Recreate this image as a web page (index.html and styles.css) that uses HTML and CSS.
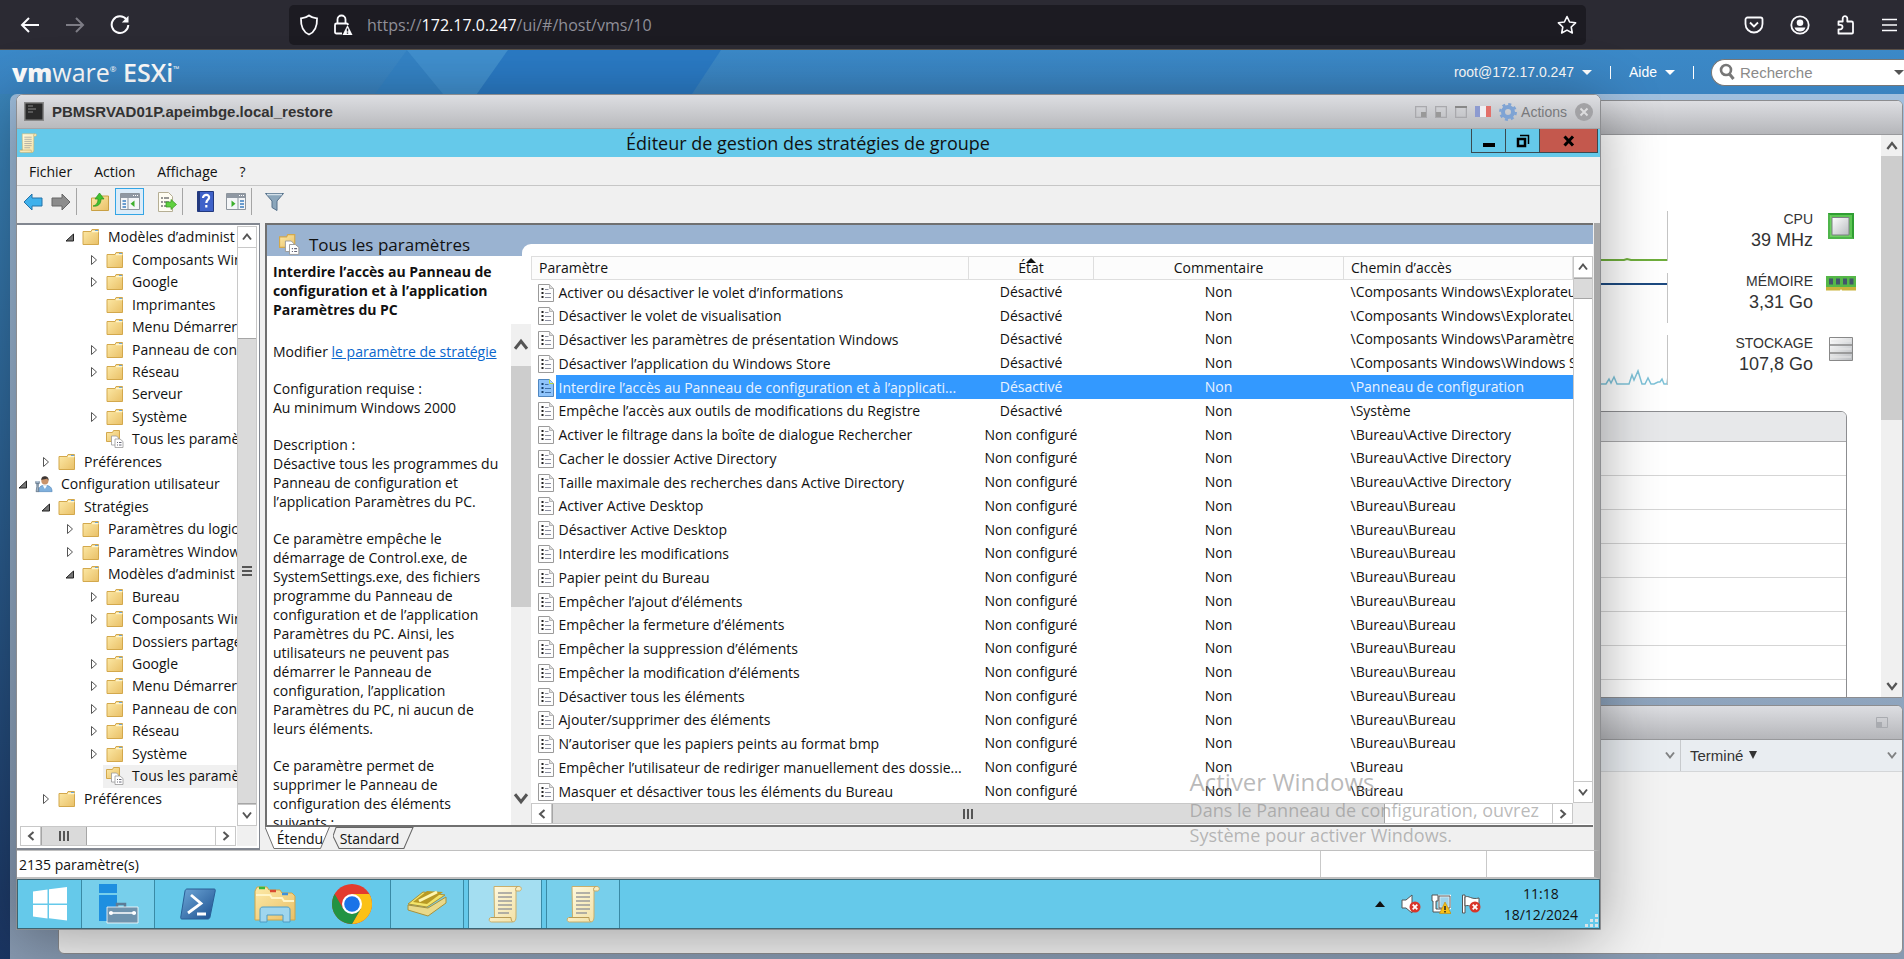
FILE: index.html
```html
<!DOCTYPE html>
<html lang="fr">
<head>
    <meta charset="utf-8">
    <title>PBMSRVAD01P.apeimbge.local_restore - VMware ESXi</title>
    <link rel="stylesheet" href="styles.css">
</head>
<body>

<!-- shared icons -->
<svg class="defs" aria-hidden="true">
    <defs>
        <linearGradient id="gFolder" x1="0" y1="0" x2="1" y2="1"><stop offset="0" stop-color="#fdeaa8"/><stop offset="1" stop-color="#e9c067"/></linearGradient>
        <linearGradient id="gMetal" x1="0" y1="0" x2="1" y2="1"><stop offset="0" stop-color="#fff"/><stop offset="1" stop-color="#b9bcc0"/></linearGradient>
        <linearGradient id="gBlue" x1="0" y1="0" x2="1" y2="1"><stop offset="0" stop-color="#6fa8d8"/><stop offset="1" stop-color="#1b4f8f"/></linearGradient>
        <linearGradient id="gScroll" x1="0" y1="0" x2="1" y2="1"><stop offset="0" stop-color="#fffbe2"/><stop offset="1" stop-color="#f1dfa2"/></linearGradient>
    </defs>
    <symbol id="folder" viewBox="0 0 18 18">
        <path d="M1 3.5h8l1-2h6.5v15H1z" fill="url(#gFolder)" stroke="#d3a84c" stroke-width="1"/>
        <path d="M10 3.5h6.5" stroke="#fff6cf" stroke-width="1.5"/><path d="M13 2.5h3" stroke="#6fa6d6"/>
    </symbol>
    <symbol id="folderdoc" viewBox="0 0 18 18">
        <path d="M.5 2.5h6l1-2h6v11H.5z" fill="url(#gFolder)" stroke="#d3a84c"/>
        <path d="M5.500 6h5l2 2v7h-7z" fill="#fff" stroke="#999" stroke-width=".8"/>
        <path d="M9 9h5l3 2.500V17.500H9z" fill="#fff" stroke="#999" stroke-width=".8"/>
        <path d="M11 12.500h1M13 12.500h2.500M11 15h1M13 15h2.500" stroke="#667" stroke-width="1"/>
    </symbol>
    <symbol id="user" viewBox="0 0 20 18">
        <path d="M4 17.500c0-5 2-7 7-7s8 2 8 7z" fill="#7fb0dd" stroke="#4a7fb2" stroke-width=".6"/>
        <path d="M8.500 10.500l2.500 4 2.500-4z" fill="#fff"/>
        <circle cx="11" cy="5.500" r="4" fill="#c9936a"/><path d="M7 4.500C7 1 9 .3 11 .3s4.500 1 4 5l-1.500-2.300c-2 .8-4 .8-6.500 1.500z" fill="#3c3532"/>
        <path d="M2 8.500v3.500l-.8 5.500h3L3.700 12V8.500M.8 6v2.500h4V6" fill="#9fb4c8" stroke="#5a6d80" stroke-width=".8"/>
    </symbol>
    <symbol id="closed" viewBox="0 0 10 12"><path d="M2.500 1.500v9l5-4.500z" fill="#fff" stroke="#555" stroke-width="1"/></symbol>
    <symbol id="open" viewBox="0 0 10 12"><path d="M8.500 3v7H1z" fill="#777" stroke="#222" stroke-width="1"/></symbol>
    <symbol id="doc" viewBox="0 0 16 18">
        <path d="M.5.500h11l4 4v13H.5z" fill="#fdfdfd" stroke="#9a9a9a"/><path d="M11.500.500v4h4" fill="#ddd" stroke="#b5b5b5"/>
        <path d="M3.500 5h2M3.500 9h2M3.500 13h2" stroke="#222" stroke-width="2"/>
        <path d="M7 5.500h3.500M7 9.500h6M7 13.500h6" stroke="#8b8fa0"/>
    </symbol>
    <symbol id="docsel" viewBox="0 0 16 18">
        <path d="M.5.500h11l4 4v13H.5z" fill="#8fc4fb" stroke="#4f86c0"/><path d="M11.500.500v4h4" fill="#a9d2ff" stroke="#b9d83a"/>
        <path d="M3.500 5h2M3.500 9h2M3.500 13h2" stroke="#15406e" stroke-width="2"/>
        <path d="M7 5.500h3.500M7 9.500h6M7 13.500h6" stroke="#3f72ad"/>
    </symbol>
    <symbol id="parchment" viewBox="0 0 34 38">
        <path d="M6 1.500h25c3 0 3 4 .5 4.500H28v26c0 3-1 5-3.500 5H3.500c-3 0-3-4.500-.5-4.500h3.500z" fill="url(#gScroll)" stroke="#c9ae6a"/>
        <path d="M28 6c-1-2 0-4 1.500-4.300M3 32.500h20c0 2 .5 3.500 1.500 4.300" fill="none" stroke="#b99c57"/>
        <path d="M10 8h14M10 12h14M10 16h14M10 20h14M10 24h14M10 28h11" stroke="#9a9a9a" stroke-width="1.300"/>
    </symbol>
    <symbol id="up" viewBox="0 0 12 12"><path d="M2 8.500l4-5 4 5" fill="none" stroke="#555" stroke-width="2"/></symbol>
    <symbol id="down" viewBox="0 0 12 12"><path d="M2 3.500l4 5 4-5" fill="none" stroke="#555" stroke-width="2"/></symbol>
    <symbol id="left" viewBox="0 0 12 12"><path d="M8.500 2l-4.500 4 4.500 4" fill="none" stroke="#555" stroke-width="2"/></symbol>
    <symbol id="right" viewBox="0 0 12 12"><path d="M3.500 2l4.500 4-4.500 4" fill="none" stroke="#555" stroke-width="2"/></symbol>
    <symbol id="redcross" viewBox="0 0 12 12"><circle cx="6" cy="6" r="5.500" fill="#d8362a"/><path d="M3.700 3.700l4.600 4.600M8.300 3.700l-4.600 4.600" stroke="#fff" stroke-width="1.800"/></symbol>
    <symbol id="panel" viewBox="0 0 20 17">
        <path d="M.5.500h19v16H.5z" fill="#f4f6f8" stroke="#8d959d"/><path d="M1 1h18v4H1z" fill="#8f98a3"/><path d="M13 2.500h1M15 2.500h1M17 2.500h1" stroke="#fff"/>
    </symbol>
</svg>

<div class="browserbar">
    <div class="nav">
        <button title="Précédent"><svg width="20" height="18" viewBox="0 0 20 18"><path d="M19 9H2M9 2L2 9l7 7" fill="none" stroke="#fbfbfe" stroke-width="2"/></svg></button>
        <button title="Suivant"><svg width="20" height="18" viewBox="0 0 20 18"><path d="M1 9h17M11 2l7 7-7 7" fill="none" stroke="#7d7c85" stroke-width="2"/></svg></button>
        <button title="Actualiser"><svg width="20" height="20" viewBox="0 0 20 20"><path d="M16.500 4.500A8.300 8.300 0 1 0 18.300 10" fill="none" stroke="#fbfbfe" stroke-width="2"/><path d="M18.500.800v6.700h-6.700z" fill="#fbfbfe"/></svg></button>
    </div>
    <div class="address">
        <svg width="20" height="22" viewBox="0 0 20 22"><path d="M10 1.500c2.500 2 5 2.600 8 2.900C18.300 12 16 18 10 20.500 4 18 1.700 12 2 4.400 5 4.100 7.500 3.500 10 1.500z" fill="none" stroke="#fbfbfe" stroke-width="1.800"/></svg>
        <svg width="20" height="22" viewBox="0 0 20 22"><path d="M4.500 9V5.500a4 4 0 0 1 8 0V9M9 19.500H3.500c-1 0-1.500-.5-1.500-1.500v-7c0-1 .5-1.500 1.500-1.500h10c1 0 1.500.5 1.500 1.500" fill="none" stroke="#fbfbfe" stroke-width="1.800"/><path d="M14.500 11l5 10h-10z" fill="#fbfbfe"/><path d="M14.500 14.500v3M14.500 18.500v1.200" stroke="#1c1b22" stroke-width="1.400"/></svg>
        <div class="url" role="textbox" aria-label="Adresse">https://<b>172.17.0.247</b>/ui/#/host/vms/10</div>
        <svg width="20" height="20" viewBox="0 0 20 20"><path d="M10 1.500l2.600 5.500 6 .8-4.400 4.200 1.100 6L10 15.100 4.700 18l1.100-6L1.400 7.800l6-.8z" fill="none" stroke="#fbfbfe" stroke-width="1.600" stroke-linejoin="round"/></svg>
    </div>
    <div class="tools">
        <button title="Pocket"><svg width="20" height="18" viewBox="0 0 20 18"><path d="M3.500 1.500h13c1 0 2 .8 2 2V8a8.500 8.500 0 0 1-17 0V3.500c0-1.200 1-2 2-2z" fill="none" stroke="#fbfbfe" stroke-width="1.800"/><path d="M6 6.500l4 4 4-4" fill="none" stroke="#fbfbfe" stroke-width="1.800"/></svg></button>
        <button title="Compte"><svg width="20" height="20" viewBox="0 0 20 20"><circle cx="10" cy="10" r="8.700" fill="none" stroke="#fbfbfe" stroke-width="1.800"/><circle cx="10" cy="7.700" r="3.300" fill="#fbfbfe"/><path d="M4.500 12.500h11c-1 3-3 4-5.500 4s-4.500-1-5.500-4z" fill="#fbfbfe"/></svg></button>
        <button title="Extensions"><svg width="20" height="20" viewBox="0 0 20 20"><path d="M2.500 6.500h4.200V3.500a2.300 2.300 0 0 1 4.600 0v3h4.200c1 0 1.500.5 1.500 1.500v9.500c0 .6-.4 1-1 1H2.500v-4.200h1.800a2.200 2.200 0 0 0 0-4.400H2.500z" fill="none" stroke="#fbfbfe" stroke-width="1.800" stroke-linejoin="round"/></svg></button>
        <button title="Menu"><svg width="15" height="14" viewBox="0 0 15 14"><path d="M0 1.500h15M0 7h15M0 12.500h15" stroke="#fbfbfe" stroke-width="1.500"/></svg></button>
    </div>
</div>

<div class="header">
    <svg class="facets" width="420" height="44" viewBox="0 0 420 44">
        <path d="M67 0L35 44h68z" fill="#3483c5"/><path d="M67 0h101l-31 44h-34z" fill="#408fce"/><path d="M168 0h213l-29 44H137z" fill="#2a7ac4"/>
    </svg>
    <div class="brand"><b>vm</b><span class="thin">ware</span><sup>®</sup> <span class="esxi">ESXi</span><sup>™</sup></div>
    <div class="account">
        <a href="#">root@172.17.0.247 <i class="caret"></i></a>
        <span class="bar"></span>
        <a href="#">Aide <i class="caret"></i></a>
        <span class="bar"></span>
    </div>
    <label class="search">
        <svg width="16" height="18" viewBox="0 0 16 18"><circle cx="7" cy="7" r="5" fill="none" stroke="#777" stroke-width="2.600"/><path d="M10.500 11l4 5" stroke="#777" stroke-width="3"/></svg>
        <input type="text" placeholder="Recherche" aria-label="Recherche">
        <i class="caret dark"></i>
    </label>
</div>

<div class="workspace">
    <div class="frame">
        <div class="panel host">
            <div class="panelhead"></div>
            <div class="hostbody">
                <div class="hostmain">
                    <div class="stat">
                        <svg class="chart" viewBox="0 0 68 50" preserveAspectRatio="xMaxYMax meet"><path d="M0 49h25l3-1 4 1h36" fill="none" stroke="#6fae3c" stroke-width="2"/></svg>
                        <div class="figures"><span>CPU</span><strong>39 MHz</strong></div>
                        <svg width="30" height="26" viewBox="0 0 30 26"><path d="M2 0h26v26H2z" fill="#2f9e32"/><path d="M4 2h22v22H4z" fill="#5cc653"/><path d="M2 26V0l26 26z" fill="#8be07a" opacity=".35"/><path d="M6 4.500h17V22H6z" fill="url(#gMetal)" stroke="#7d8085"/></svg>
                    </div>
                    <div class="stat">
                        <svg class="chart" viewBox="0 0 68 50" preserveAspectRatio="xMaxYMax meet"><path d="M0 11h68" stroke="#1d4a80" stroke-width="2"/></svg>
                        <div class="figures"><span>MÉMOIRE</span><strong>3,31 Go</strong></div>
                        <svg width="30" height="16" viewBox="0 0 30 16"><path d="M0 1h30v11H0z" fill="#55b848"/><path d="M0 12h30v3.500H16l-1-1.500-1 1.500H0z" fill="#c9b33c"/><path d="M3 3.500h4v6H3zM10 3.500h4v6h-4zM17 3.500h4v6h-4zM23.500 3.500h4v6h-4z" fill="#43566b"/></svg>
                    </div>
                    <div class="stat">
                        <svg class="chart" viewBox="0 0 68 50" preserveAspectRatio="xMaxYMax meet"><path d="M0 49h7l3-5 2 4 3-6 3 7h12l3-9 2 5 4-9 4 13h3l3-6 3 6h3l4-2h2l2-3 2 5h3l1-8" fill="none" stroke="#7fc3d9" stroke-width="1.500"/></svg>
                        <div class="figures"><span>STOCKAGE</span><strong>107,8 Go</strong></div>
                        <svg width="30" height="24" viewBox="0 0 30 24"><path d="M3.500.500h23v23h-23z" fill="url(#gMetal)" stroke="#888"/><path d="M3.500 8h23M3.500 16h23" stroke="#888" stroke-width="1.500"/><path d="M5 4h20M5 12h20M5 20h20" stroke="#e8e8e8"/></svg>
                    </div>
                    <div class="grid"><div></div><div></div><div></div><div></div><div></div><div></div><div></div><div></div><div></div></div>
                </div>
                <div class="scroll plain hostscroll">
                    <button title="Haut"><svg width="14" height="14"><use href="#up"/></svg></button>
                    <div class="thumb"></div>
                    <div class="track"></div>
                    <button title="Bas"><svg width="14" height="14"><use href="#down"/></svg></button>
                </div>
            </div>
        </div>
        <div class="panel tasks">
            <div class="panelhead"><svg width="12" height="11" viewBox="0 0 12 11"><path d="M.5.500h11v10H.5z" fill="none" stroke="#a9abb0"/><path d="M1 5h5v5H1z" fill="#a9abb0"/></svg></div>
            <div class="taskcols">
                <div class="col"><svg width="12" height="12"><use href="#down"/></svg></div>
                <div class="col last">Terminé <i class="sort"></i><svg width="12" height="12"><use href="#down"/></svg></div>
            </div>
        </div>
    </div>

    <!-- console window -->
    <div class="console">
        <div class="consolehead">
            <svg width="20" height="19" viewBox="0 0 20 19"><path d="M.5.500h19v18H.5z" fill="#2a2a2a" stroke="#888" stroke-width="2"/><path d="M4 4h5M4 7h8M4 10h5" stroke="#888"/></svg>
            <h1>PBMSRVAD01P.apeimbge.local_restore</h1>
            <div class="consoletools">
                <svg width="12" height="12" viewBox="0 0 12 12"><path d="M.5.500h11v11H.5z" fill="none" stroke="#a9a9ad" stroke-width="1.500"/><path d="M6 6h5v5H6z" fill="#999"/></svg>
                <svg width="12" height="12" viewBox="0 0 12 12"><path d="M.5.500h11v11H.5z" fill="none" stroke="#a9a9ad" stroke-width="1.500"/><path d="M1 6h5v5H1z" fill="#999"/></svg>
                <svg width="12" height="12" viewBox="0 0 12 12"><path d="M.5.500h11v11H.5z" fill="none" stroke="#a9a9ad" stroke-width="1.500"/><path d="M0 1h12" stroke="#888" stroke-width="2"/></svg>
                <svg width="16" height="11" viewBox="0 0 16 11"><path d="M0 0h5v11H0z" fill="#8d9bd0"/><path d="M5 0h6v11H5z" fill="#efeff2"/><path d="M11 0h5v11h-5z" fill="#e2706a"/></svg>
                <svg width="18" height="18" viewBox="0 0 18 18"><circle cx="9" cy="9" r="5" fill="none" stroke="#7ea3d4" stroke-width="4"/><circle cx="9" cy="9" r="7.700" fill="none" stroke="#7ea3d4" stroke-width="2.500" stroke-dasharray="3 3.050"/></svg>
                <a href="#">Actions</a>
                <button title="Fermer"><svg width="18" height="18" viewBox="0 0 18 18"><circle cx="9" cy="9" r="9" fill="#a2a2a5"/><path d="M5.500 5.500l7 7M12.500 5.500l-7 7" stroke="#dcdcde" stroke-width="2"/></svg></button>
            </div>
        </div>

        <div class="guest">
            <div class="titlebar">
                <svg width="18" height="20"><use href="#parchment"/></svg>
                <h2>Éditeur de gestion des stratégies de groupe</h2>
                <div class="winbuttons">
                    <button title="Réduire"><svg width="14" height="14" viewBox="0 0 14 14"><path d="M1 9h12v4H1z"/></svg></button>
                    <button title="Restaurer"><svg width="14" height="14" viewBox="0 0 14 14"><path d="M2 5h7v7H2z" fill="none" stroke="#000" stroke-width="2.500"/><path d="M4 1.500h8.500V10" fill="none" stroke="#000" stroke-width="1.500"/></svg></button>
                    <button class="close" title="Fermer"><svg width="14" height="14" viewBox="0 0 14 14"><path d="M2.500 2.500l8.500 9M11 2.500l-8.500 9" stroke="#000" stroke-width="3"/></svg></button>
                </div>
            </div>
            <div class="menu"><button>Fichier</button><button>Action</button><button>Affichage</button><button>?</button></div>
            <div class="toolbar">
                <button title="Précédent"><svg width="20" height="20" viewBox="0 0 20 20"><path d="M1 10l8-8v4h10v8H9v4z" fill="#3fb1ec" stroke="#2573a8"/></svg></button>
                <button title="Suivant"><svg width="20" height="20" viewBox="0 0 20 20"><path d="M19 10l-8-8v4H1v8h10v4z" fill="#8c8c8c" stroke="#666"/></svg></button>
                <span class="sep"></span>
                <button title="Dossier parent"><svg width="20" height="20" viewBox="0 0 20 20"><path d="M1.500 6h9l1-2h7v14.500h-17z" fill="url(#gFolder)" stroke="#c9a044"/><path d="M3 14c4-1 5-4 5-7H5l4.500-6L14 7h-3c0 5-3 8-8 7z" fill="#3fc22f" stroke="#2b8f1f" stroke-width=".7"/></svg></button>
                <button class="on" title="Arborescence"><svg width="20" height="17" viewBox="0 0 20 17"><use href="#panel"/><path d="M2.500 8H6M2.500 11H6M2.500 14H6" stroke="#3d7fc0" stroke-width="1.500"/><path d="M8 5v12" stroke="#8d959d"/><path d="M14.500 7.500v6.500l-4-3.300z" fill="#3db02c"/></svg></button>
                <button class="export" title="Exporter"><svg width="20" height="20" viewBox="0 0 20 20"><path d="M1.500.500h10l4 4v15h-14z" fill="#fffdf2" stroke="#b5ae94"/><path d="M4 6h2M4 10h2M4 14h2M7 6h5M7 10h5M7 14h4" stroke="#777" stroke-width="1.400"/><path d="M9 10h5V7.500l5.500 5-5.500 5V15H9z" fill="#5fd03f" stroke="#35921f" stroke-width=".7"/></svg></button>
                <span class="sep"></span>
                <button title="Aide"><svg width="17" height="21" viewBox="0 0 17 21"><path d="M.5.500h16v20H.5z" fill="#3f62c9" stroke="#22397f"/><path d="M1 1h2v19H1z" fill="#22397f"/><path d="M6 7c0-4.500 7-4 6 0-.5 2-2.500 2-2.700 5M9.300 14v2.500" fill="none" stroke="#fff" stroke-width="2.200"/></svg></button>
                <button title="Volet Actions"><svg width="20" height="17" viewBox="0 0 20 17"><use href="#panel"/><path d="M14 8h4M14 11h4M14 14h4" stroke="#3d7fc0" stroke-width="1.500"/><path d="M12 5v12" stroke="#8d959d"/><path d="M5.500 7.500v6.500l4-3.300z" fill="#3db02c"/></svg></button>
                <span class="sep"></span>
                <button title="Filtre"><svg width="19" height="19" viewBox="0 0 19 19"><path d="M.5 1.500h18L12 9v9.500l-5-3V9z" fill="#8ba6bb" stroke="#56718a"/><path d="M2 2.500h15" stroke="#d5e1ea" stroke-width="1.500"/></svg></button>
            </div>

            <div class="mmc">
                <div class="treepane">
                    <ul class="tree">
                        <li class="l2"><svg class="ex"><use href="#open"/></svg><svg class="ic"><use href="#folder"/></svg>Modèles d’administ</li>
                        <li class="l3"><svg class="ex"><use href="#closed"/></svg><svg class="ic"><use href="#folder"/></svg>Composants Windows</li>
                        <li class="l3"><svg class="ex"><use href="#closed"/></svg><svg class="ic"><use href="#folder"/></svg>Google</li>
                        <li class="l3"><svg class="ex"></svg><svg class="ic"><use href="#folder"/></svg>Imprimantes</li>
                        <li class="l3"><svg class="ex"></svg><svg class="ic"><use href="#folder"/></svg>Menu Démarrer</li>
                        <li class="l3"><svg class="ex"><use href="#closed"/></svg><svg class="ic"><use href="#folder"/></svg>Panneau de configuration</li>
                        <li class="l3"><svg class="ex"><use href="#closed"/></svg><svg class="ic"><use href="#folder"/></svg>Réseau</li>
                        <li class="l3"><svg class="ex"></svg><svg class="ic"><use href="#folder"/></svg>Serveur</li>
                        <li class="l3"><svg class="ex"><use href="#closed"/></svg><svg class="ic"><use href="#folder"/></svg>Système</li>
                        <li class="l3"><svg class="ex"></svg><svg class="ic"><use href="#folderdoc"/></svg>Tous les paramètres</li>
                        <li class="l1"><svg class="ex"><use href="#closed"/></svg><svg class="ic"><use href="#folder"/></svg>Préférences</li>
                        <li class="l0"><svg class="ex"><use href="#open"/></svg><svg class="ic"><use href="#user"/></svg>Configuration utilisateur</li>
                        <li class="l1"><svg class="ex"><use href="#open"/></svg><svg class="ic"><use href="#folder"/></svg>Stratégies</li>
                        <li class="l2"><svg class="ex"><use href="#closed"/></svg><svg class="ic"><use href="#folder"/></svg>Paramètres du logiciel</li>
                        <li class="l2"><svg class="ex"><use href="#closed"/></svg><svg class="ic"><use href="#folder"/></svg>Paramètres Windows</li>
                        <li class="l2"><svg class="ex"><use href="#open"/></svg><svg class="ic"><use href="#folder"/></svg>Modèles d’administ</li>
                        <li class="l3"><svg class="ex"><use href="#closed"/></svg><svg class="ic"><use href="#folder"/></svg>Bureau</li>
                        <li class="l3"><svg class="ex"><use href="#closed"/></svg><svg class="ic"><use href="#folder"/></svg>Composants Windows</li>
                        <li class="l3"><svg class="ex"></svg><svg class="ic"><use href="#folder"/></svg>Dossiers partagés</li>
                        <li class="l3"><svg class="ex"><use href="#closed"/></svg><svg class="ic"><use href="#folder"/></svg>Google</li>
                        <li class="l3"><svg class="ex"><use href="#closed"/></svg><svg class="ic"><use href="#folder"/></svg>Menu Démarrer</li>
                        <li class="l3"><svg class="ex"><use href="#closed"/></svg><svg class="ic"><use href="#folder"/></svg>Panneau de configuration</li>
                        <li class="l3"><svg class="ex"><use href="#closed"/></svg><svg class="ic"><use href="#folder"/></svg>Réseau</li>
                        <li class="l3"><svg class="ex"><use href="#closed"/></svg><svg class="ic"><use href="#folder"/></svg>Système</li>
                        <li class="l3 current"><svg class="ex"></svg><svg class="ic"><use href="#folderdoc"/></svg>Tous les paramètres</li>
                        <li class="l1"><svg class="ex"><use href="#closed"/></svg><svg class="ic"><use href="#folder"/></svg>Préférences</li>
                    </ul>
                    <div class="scroll treev">
                        <button title="Haut"><svg width="12" height="12"><use href="#up"/></svg></button>
                        <div class="track"></div>
                        <div class="thumb"><svg width="10" height="10" viewBox="0 0 10 10"><path d="M0 1h10M0 5h10M0 9h10" stroke="#555" stroke-width="2"/></svg></div>
                        <button title="Bas"><svg width="12" height="12"><use href="#down"/></svg></button>
                    </div>
                    <div class="scroll horiz treeh">
                        <button title="Gauche"><svg width="12" height="12"><use href="#left"/></svg></button>
                        <div class="thumb"><svg width="10" height="10" viewBox="0 0 10 10"><path d="M1 0v10M5 0v10M9 0v10" stroke="#555" stroke-width="2"/></svg></div>
                        <div class="track"></div>
                        <button title="Droite"><svg width="12" height="12"><use href="#right"/></svg></button>
                    </div>
                    <div class="corner"></div>
                </div>

                <div class="right">
                    <div class="result">
                        <div class="extended">
                            <div class="banner"><svg width="21" height="21"><use href="#folderdoc"/></svg>Tous les paramètres</div>
                            <h3>Interdire l’accès au Panneau de<br>configuration et à l’application<br>Paramètres du PC</h3>
                            <div class="descwrap">
                                <div class="desc">
                                    <p>Modifier <a href="#">le paramètre de stratégie</a></p>
                                    <p>Configuration requise :<br>Au minimum Windows 2000</p>
                                    <p>Description :<br>Désactive tous les programmes du<br>Panneau de configuration et<br>l’application Paramètres du PC.</p>
                                    <p>Ce paramètre empêche le<br>démarrage de Control.exe, de<br>SystemSettings.exe, des fichiers<br>programme du Panneau de<br>configuration et de l’application<br>Paramètres du PC. Ainsi, les<br>utilisateurs ne peuvent pas<br>démarrer le Panneau de<br>configuration, l’application<br>Paramètres du PC, ni aucun de<br>leurs éléments.</p>
                                    <p>Ce paramètre permet de<br>supprimer le Panneau de<br>configuration des éléments<br>suivants :</p>
                                </div>
                                <div class="scroll plain descscroll">
                                    <button title="Haut"><svg width="18" height="18"><use href="#up"/></svg></button>
                                    <div class="thumb"></div>
                                    <div class="track"></div>
                                    <button title="Bas"><svg width="18" height="18"><use href="#down"/></svg></button>
                                </div>
                            </div>
                        </div>
                        <div class="listside">
                            <div class="listframe">
                                <div class="list">
                                    <table>
                                        <colgroup><col class="c1"><col class="c2"><col class="c3"><col></colgroup>
                                        <thead><tr><th>Paramètre</th><th class="mid"><span class="sorted">État<i></i></span></th><th class="mid">Commentaire</th><th>Chemin d’accès</th></tr></thead>
                                        <tbody>
                                            <tr><td><svg><use href="#doc"/></svg><span>Activer ou désactiver le volet d’informations</span></td><td>Désactivé</td><td>Non</td><td>\Composants Windows\Explorateur de fichiers</td></tr>
                                            <tr><td><svg><use href="#doc"/></svg><span>Désactiver le volet de visualisation</span></td><td>Désactivé</td><td>Non</td><td>\Composants Windows\Explorateur de fichiers</td></tr>
                                            <tr><td><svg><use href="#doc"/></svg><span>Désactiver les paramètres de présentation Windows</span></td><td>Désactivé</td><td>Non</td><td>\Composants Windows\Paramètres</td></tr>
                                            <tr><td><svg><use href="#doc"/></svg><span>Désactiver l’application du Windows Store</span></td><td>Désactivé</td><td>Non</td><td>\Composants Windows\Windows Store</td></tr>
                                            <tr class="selected"><td><svg><use href="#docsel"/></svg><span>Interdire l’accès au Panneau de configuration et à l’applicati...</span></td><td>Désactivé</td><td>Non</td><td>\Panneau de configuration</td></tr>
                                            <tr><td><svg><use href="#doc"/></svg><span>Empêche l’accès aux outils de modifications du Registre</span></td><td>Désactivé</td><td>Non</td><td>\Système</td></tr>
                                            <tr><td><svg><use href="#doc"/></svg><span>Activer le filtrage dans la boîte de dialogue Rechercher</span></td><td>Non configuré</td><td>Non</td><td>\Bureau\Active Directory</td></tr>
                                            <tr><td><svg><use href="#doc"/></svg><span>Cacher le dossier Active Directory</span></td><td>Non configuré</td><td>Non</td><td>\Bureau\Active Directory</td></tr>
                                            <tr><td><svg><use href="#doc"/></svg><span>Taille maximale des recherches dans Active Directory</span></td><td>Non configuré</td><td>Non</td><td>\Bureau\Active Directory</td></tr>
                                            <tr><td><svg><use href="#doc"/></svg><span>Activer Active Desktop</span></td><td>Non configuré</td><td>Non</td><td>\Bureau\Bureau</td></tr>
                                            <tr><td><svg><use href="#doc"/></svg><span>Désactiver Active Desktop</span></td><td>Non configuré</td><td>Non</td><td>\Bureau\Bureau</td></tr>
                                            <tr><td><svg><use href="#doc"/></svg><span>Interdire les modifications</span></td><td>Non configuré</td><td>Non</td><td>\Bureau\Bureau</td></tr>
                                            <tr><td><svg><use href="#doc"/></svg><span>Papier peint du Bureau</span></td><td>Non configuré</td><td>Non</td><td>\Bureau\Bureau</td></tr>
                                            <tr><td><svg><use href="#doc"/></svg><span>Empêcher l’ajout d’éléments</span></td><td>Non configuré</td><td>Non</td><td>\Bureau\Bureau</td></tr>
                                            <tr><td><svg><use href="#doc"/></svg><span>Empêcher la fermeture d’éléments</span></td><td>Non configuré</td><td>Non</td><td>\Bureau\Bureau</td></tr>
                                            <tr><td><svg><use href="#doc"/></svg><span>Empêcher la suppression d’éléments</span></td><td>Non configuré</td><td>Non</td><td>\Bureau\Bureau</td></tr>
                                            <tr><td><svg><use href="#doc"/></svg><span>Empêcher la modification d’éléments</span></td><td>Non configuré</td><td>Non</td><td>\Bureau\Bureau</td></tr>
                                            <tr><td><svg><use href="#doc"/></svg><span>Désactiver tous les éléments</span></td><td>Non configuré</td><td>Non</td><td>\Bureau\Bureau</td></tr>
                                            <tr><td><svg><use href="#doc"/></svg><span>Ajouter/supprimer des éléments</span></td><td>Non configuré</td><td>Non</td><td>\Bureau\Bureau</td></tr>
                                            <tr><td><svg><use href="#doc"/></svg><span>N’autoriser que les papiers peints au format bmp</span></td><td>Non configuré</td><td>Non</td><td>\Bureau\Bureau</td></tr>
                                            <tr><td><svg><use href="#doc"/></svg><span>Empêcher l’utilisateur de rediriger manuellement des dossie...</span></td><td>Non configuré</td><td>Non</td><td>\Bureau</td></tr>
                                            <tr><td><svg><use href="#doc"/></svg><span>Masquer et désactiver tous les éléments du Bureau</span></td><td>Non configuré</td><td>Non</td><td>\Bureau</td></tr>
                                        </tbody>
                                    </table>
                                </div>
                                <div class="scroll listv">
                                    <button title="Haut"><svg width="12" height="12"><use href="#up"/></svg></button>
                                    <div class="thumb"></div>
                                    <div class="track"></div>
                                    <button title="Bas"><svg width="12" height="12"><use href="#down"/></svg></button>
                                </div>
                                <div class="scroll horiz listh">
                                    <button title="Gauche"><svg width="12" height="12"><use href="#left"/></svg></button>
                                    <div class="thumb"><svg width="10" height="10" viewBox="0 0 10 10"><path d="M1 0v10M5 0v10M9 0v10" stroke="#555" stroke-width="2"/></svg></div>
                                    <div class="track"></div>
                                    <button title="Droite"><svg width="12" height="12"><use href="#right"/></svg></button>
                                </div>
                                <div class="corner"></div>
                            </div>
                        </div>
                    </div>
                    <div class="tabs">
                        <button class="active"><svg viewBox="0 0 76 22" preserveAspectRatio="none"><path d="M0 0l10 21.500h52L72 0" fill="#fff" stroke="#666"/></svg><span>Étendu</span></button>
                        <button><svg viewBox="0 0 80 22" preserveAspectRatio="none"><path d="M3 .500L0 9l6 12.500h64L79 .500z" fill="#f0f0f0" stroke="#666"/></svg><span>Standard</span></button>
                    </div>
                </div>
            </div>

            <div class="status"><span>2135 paramètre(s)</span><span class="cell a"></span><span class="cell b"></span></div>

            <div class="taskbar">
                <button class="start" title="Démarrer"><svg width="34" height="34" viewBox="0 0 34 34"><path d="M0 4.500L14.500 2.500v14H0zM16 2.200L34 0v16.500H16zM0 18h14.500v13.500L0 29.500zM16 18h18v15.500L16 31.200z" fill="#fff"/></svg></button>
                <button class="run" title="Gestionnaire de serveur"><svg width="42" height="42" viewBox="0 0 42 42"><path d="M2 1h18v9H2zM2 12h18v15h-9v11H2z" fill="#1e8fe0"/><path d="M20 24v-3h8v3" fill="none" stroke="#5d7c96" stroke-width="2.500"/><path d="M10 24h31v16H10z" fill="#6f93ad" stroke="#fff" stroke-width=".8"/><path d="M12 30h27" stroke="#fff" stroke-width="1.500"/><circle cx="14" cy="30" r="2" fill="#fff"/><circle cx="37" cy="30" r="2" fill="#fff"/></svg></button>
                <button title="PowerShell"><svg width="36" height="32" viewBox="0 0 36 32"><path d="M7 1h27c1 0 1.500.7 1.300 1.500L30 29c-.2 1-1 2-2 2H2c-1 0-1.500-.7-1.300-1.500L5 3c.2-1 1-2 2-2z" fill="url(#gBlue)" stroke="#2a5f96"/><path d="M11 7l10 8.500L8 25M17 26h9" fill="none" stroke="#fff" stroke-width="2.800"/></svg></button>
                <button title="Explorateur"><svg width="42" height="38" viewBox="0 0 42 38"><path d="M1 6l2-4h10l2 3h11l2 3h10l3 3v24H1z" fill="url(#gFolder)" stroke="#cfa64a"/><path d="M2 10h14l2 3h10l2 3h10" fill="none" stroke="#fff5c8" stroke-width="2"/><path d="M5 3h6" stroke="#37b839" stroke-width="2.500"/><path d="M16 6h6" stroke="#d94b32" stroke-width="2.500"/><path d="M28 9h6" stroke="#3f91d8" stroke-width="2.500"/><path d="M6 37V25c0-2 1-3 3-3h24c2 0 3 1 3 3v12h-7v-7H13v7z" fill="#9fd6ee" stroke="#4f9cc4"/></svg></button>
                <button title="Chrome"><svg width="40" height="40" viewBox="0 0 40 40"><circle cx="20" cy="20" r="20" fill="#e33b2e"/><path d="M20 40a20 20 0 0 0 17.320-30H20l8.660 15z" fill="#fbc116"/><path d="M2.700 10l8.640 15L20 30l8.660-5L20 40A20 20 0 0 1 2.700 10z" fill="#229342"/><circle cx="20" cy="20" r="10" fill="#fff"/><circle cx="20" cy="20" r="7.800" fill="#1a73e8"/></svg></button>
                <button class="run" title="Stratégie"><svg width="40" height="28" viewBox="0 0 40 28"><path d="M1 15l20 3 18-11v6L21 26 1 20z" fill="#e9d98a" stroke="#a8923b"/><path d="M1 14L16 2l22 3-18 12z" fill="#f3e46a" stroke="#a8923b"/><path d="M6 12L20 1l16 1-16 12z" fill="#b89a25"/><path d="M12 11L30 2" stroke="#fff7b0" stroke-width="3"/></svg></button>
                <button class="run front" title="Éditeur de gestion des stratégies de groupe"><svg width="34" height="38"><use href="#parchment"/></svg></button>
                <button class="run" title="Gestion de stratégie de groupe"><svg width="34" height="38"><use href="#parchment"/></svg></button>
                <div class="tray">
                    <svg class="more" width="10" height="6" viewBox="0 0 10 6"><path d="M0 6l5-6 5 6z" fill="#111"/></svg>
                    <svg width="20" height="20" viewBox="0 0 20 20"><path d="M1 6h4l6-5v18l-6-5H1z" fill="#fff" stroke="#555"/><use href="#redcross" x="8" y="7" width="12" height="12"/></svg>
                    <svg width="20" height="20" viewBox="0 0 20 20"><path d="M8 2h11v12H8z" fill="#9fd3ea" stroke="#fff" stroke-width="2.500"/><path d="M8 2h11v12H8z" fill="none" stroke="#555" stroke-width="1"/><path d="M1 1h6v6H5v8h7v3H2V7H1z" fill="#fff" stroke="#555"/><path d="M14 8l6 11.500H8.500z" fill="#f8c015" stroke="#c58a00" stroke-width=".6"/><path d="M14 12v4M14 17v1.500" stroke="#222" stroke-width="1.500"/></svg>
                    <svg width="20" height="20" viewBox="0 0 20 20"><path d="M1.500 1h2.500v18H1.500z" fill="#fff" stroke="#555"/><path d="M4 3c4-2 6 3 14 1v9c-7 2-9-3-14-1z" fill="#fff" stroke="#555"/><use href="#redcross" x="8" y="7" width="12" height="12"/></svg>
                    <div class="clock">11:18<br>18/12/2024</div>
                </div>
            </div>

            <div class="watermark"><strong>Activer Windows</strong>Dans le Panneau de configuration, ouvrez<br>Système pour activer Windows.</div>
            <svg class="grip" width="14" height="14" viewBox="0 0 14 14"><path d="M10 0h3v3h-3zM10 5h3v3h-3zM5 5h3v3H5zM10 10h3v3h-3zM5 10h3v3H5zM0 10h3v3H0z" fill="#d9e4e8"/></svg>
        </div>
    </div>
</div>

</body>
</html>
```
FILE: styles.css
```css
* { box-sizing: border-box; }
html, body { height: 100%; }
body {
    margin: 0;
    display: flex;
    flex-direction: column;
    font-family: "Liberation Sans", Arial, sans-serif;
    font-size: 14px;
    color: #333;
    overflow: hidden;
}
button { margin: 0; padding: 0; border: 0; background: none; font: inherit; color: inherit; display: flex; align-items: center; justify-content: center; }
h1, h2, h3, p, ul { margin: 0; padding: 0; }
svg { flex: none; display: block; }
a { color: inherit; text-decoration: none; }
.defs { position: absolute; width: 0; height: 0; }

/* browser */
.browserbar { height: 50px; flex: none; display: flex; align-items: center; background: #2b2a33; border-bottom: 1px solid #5a5047; }
.nav { width: 289px; display: flex; gap: 25px; padding-left: 20px; }
.address { flex: 1; height: 40px; display: flex; align-items: center; gap: 14px; padding: 0 9px 0 10px; background: #1c1b22; border-radius: 5px; }
.url { flex: 1; font: 16px "Open Sans", "Noto Sans", sans-serif; color: #8f8f98; }
.url b { color: #fbfbfe; font-weight: normal; }
.tools { width: 318px; display: flex; align-items: center; justify-content: flex-end; gap: 26px; padding-right: 7px; }

/* ESXi header */
.header { position: relative; height: 44px; flex: none; display: flex; align-items: center; background: linear-gradient(#3b89c8, #3a83c0); color: #fff; }
.facets { position: absolute; left: 340px; top: 0; }
.brand { position: relative; flex: 1; padding-left: 12px; font: 25px/32px "Open Sans", sans-serif; }
.brand b { font-weight: 800; }
.brand .esxi { font-weight: 600; }
.brand sup { font-size: 8px; line-height: 8px; vertical-align: 10px; }
.account { display: flex; align-items: center; gap: 18px; font-size: 14px; }
.account a { display: flex; align-items: center; gap: 8px; }
.bar { width: 1px; height: 13px; background: #fff; }
.caret { width: 0; height: 0; border: 5px solid transparent; border-top-color: #fff; border-bottom: 0; }
.caret.dark { border-top-color: #555; }
.search { width: 193px; height: 27px; margin-left: 17px; padding-left: 7px; display: flex; align-items: center; gap: 5px; background: #fff; border: 1px solid #777; border-right: 0; border-radius: 14px 0 0 14px; }
.search input { flex: 1; min-width: 0; border: 0; padding: 0; background: none; font: 15px "Liberation Sans", Arial, sans-serif; }
.search input::placeholder { color: #8a8a8a; opacity: 1; }

/* host client */
.workspace { position: relative; flex: 1; min-height: 0; padding-left: 10px; display: flex; background: linear-gradient(#3a84b9, #1b3562); }
.frame { flex: 1; display: flex; flex-direction: column; gap: 7px; padding: 6px 1px 5px 48px; background: linear-gradient(#a0bfde, #8799b0); border-radius: 7px 0 0 0; }
.panel { display: flex; flex-direction: column; overflow: hidden; border: 1px solid #8c8d90; border-radius: 6px; background: #fff; min-height: 0; }
.host { flex: 598; border-radius: 6px 6px 2px 2px; }
.tasks { flex: 248; background: #f3f3f3; }
.panelhead { height: 34px; flex: none; display: flex; align-items: center; justify-content: flex-end; padding-right: 14px; background: linear-gradient(#dddee2, #b5b6ba); border-bottom: 1px solid #98999c; }
.hostbody { flex: 1; min-height: 0; display: flex; }
.hostmain { flex: 1; padding-top: 76px; overflow: hidden; }
.stat { display: grid; grid-template-columns: 1fr 145px 43px; align-items: start; height: 50px; margin-bottom: 12px; padding-right: 25px; }
.stat > svg:last-child { margin: 2px 0 0 13px; }
.chart { width: 100%; height: 50px; border-right: 1px solid #c4c4c4; }
.figures { display: flex; flex-direction: column; align-items: flex-end; gap: 3px; font-size: 14px; }
.figures strong { font-size: 18px; font-weight: normal; }
.grid { height: 320px; margin: 26px 34px 0 0; border: 1px solid #8c8d90; border-radius: 0 6px 0 0; }
.grid div { height: 34px; border-bottom: 1px solid #d5d5d5; }
.grid div:first-child { height: 30px; background: #e7e8ea; border-color: #a9a9ab; border-radius: 0 5px 0 0; }
.taskcols { display: flex; justify-content: flex-end; height: 32px; background: #e9edf1; border-bottom: 1px solid #d4d6d8; }
.col { display: flex; align-items: center; justify-content: flex-end; flex: 1; padding-right: 4px; font-size: 15px; }
.col svg { opacity: .7; }
.col.last { flex: none; width: 222px; gap: 6px; padding: 0 4px 0 9px; border-left: 1px solid #c7cacd; }
.col.last svg { margin-left: auto; }
.sort { border: 4px solid transparent; border-top: 8px solid #333; border-bottom: 0; }

/* scroll bars */
.scroll { display: flex; flex-direction: column; background: #fff; border: 1px solid #c8c8c8; }
.scroll button { height: 21px; flex: none; border-bottom: 1px solid #c8c8c8; }
.scroll button:last-child { border-bottom: 0; border-top: 1px solid #c8c8c8; }
.scroll .thumb { display: flex; align-items: center; justify-content: center; background: #dadada; border: 1px solid #a6a6a6; }
.scroll.horiz { flex-direction: row; }
.scroll.horiz button { width: 20px; height: auto; border: 0; border-right: 1px solid #c8c8c8; }
.scroll.horiz button:last-child { border: 0; border-left: 1px solid #c8c8c8; }
.scroll.plain { background: #f0f0f0; border: 0; }
.scroll.plain button, .scroll.plain button:last-child { border: 0; }
.scroll.plain .thumb { background: #cdcdcd; border: 0; }
.corner { background: #f0f0f0; }
.hostscroll { width: 21px; }
.hostscroll .thumb { flex: 264; }
.hostscroll .track { flex: 256; }

/* console window */
.console { position: absolute; left: 16px; right: 303px; top: 0; bottom: 29px; display: flex; flex-direction: column; border: 1px solid #8c8d90; border-radius: 7px 7px 0 0; box-shadow: 0 8px 60px rgba(0, 0, 0, .35); background: #fff; }
.consolehead { height: 34px; flex: none; display: flex; align-items: center; gap: 8px; padding: 0 7px; background: linear-gradient(#dddee2, #b9babd); border-bottom: 1px solid #a5a5a8; border-radius: 6px 6px 0 0; }
.consolehead h1 { flex: 1; font-size: 15px; }
.consoletools { display: flex; align-items: center; gap: 8px; color: #77787b; }
.consoletools a { margin-left: -4px; }

/* remote desktop */
.guest { position: relative; flex: 1; min-height: 0; display: flex; flex-direction: column; font-family: "Open Sans", "Noto Sans", sans-serif; font-size: 14px; color: #111; background: #f0f0f0; }
.titlebar { height: 28px; flex: none; display: flex; align-items: center; padding: 0 2px; background: #65c9ea; }
.titlebar h2 { flex: 1; padding-left: 108px; text-align: center; font-size: 18px; line-height: 24px; font-weight: normal; }
.winbuttons { display: flex; align-self: flex-start; height: 24px; border: 1px solid #3a4a50; border-top: 0; }
.winbuttons button { width: 34px; border-right: 1px solid #3a4a50; }
.winbuttons .close { width: 57px; background: #c4584d; border: 0; }
.menu { height: 29px; flex: none; display: flex; align-items: center; gap: 22px; padding-left: 12px; border-bottom: 1px solid #c6c6c6; }
.toolbar { height: 37px; flex: none; display: flex; align-items: flex-start; gap: 1px; padding: 2px 0 0 4px; }
.toolbar button { width: 29px; height: 27px; border: 1px solid transparent; }
.toolbar button:first-child { width: 24px; }
.toolbar .on { background: #dcecf9; border-color: #33a5e5; }
.toolbar .export { margin-left: 7px; }
.toolbar .sep { width: 1px; height: 27px; margin-right: 7px; background: #a5a5a5; }
.mmc { flex: 1; min-height: 0; display: flex; gap: 5px; padding-right: 1px; border-right: 6px solid #a7a7a7; }

.treepane { width: 243px; flex: none; display: grid; grid-template: 1fr 20px / 1fr 20px; padding: 1px 2px 2px 1px; background: #fff; border: 1px solid #828790; border-width: 2px 1px 2px 0; }
.tree { list-style: none; display: grid; grid-template-rows: repeat(26, 1fr); padding-bottom: 16px; overflow: hidden; min-height: 0; }
.tree li { display: flex; align-items: center; white-space: nowrap; min-height: 0; line-height: 18px; }
.tree .ex { width: 10px; height: 12px; margin-right: 7px; }
.tree .ic { width: 18px; height: 18px; margin-right: 8px; }
.l1 { padding-left: 23px; }
.l2 { padding-left: 47px; }
.l3 { padding-left: 71px; }
.tree .current { background: linear-gradient(#f0f0f0, #f0f0f0) 85px 0 no-repeat; }
.treev .track { flex: 91; }
.treev .thumb { flex: 469; border-width: 1px 0; }
.treeh { margin: 0 1px 0 2px; }
.treeh .thumb { width: 46px; border-width: 0 1px; }
.treeh .track { flex: 1; }

.right { flex: 1; min-width: 0; display: flex; flex-direction: column; }
.result { flex: 1; min-height: 0; display: flex; background: #fff; border: 1px solid #707070; border-width: 2px 0 2px 2px; }
.extended { position: relative; z-index: 1; width: 264px; flex: none; display: flex; flex-direction: column; }
.banner { height: 31px; flex: none; display: flex; align-items: center; gap: 9px; margin-right: 9px; padding: 8px 0 0 12px; background: #9ab3d1; font-size: 17px; }
.extended h3 { padding: 6px 0 0 6px; font-size: 14px; line-height: 19px; }
.descwrap { flex: 1; min-height: 0; display: flex; justify-content: space-between; margin-top: 5px; }
.desc { padding: 18px 0 0 6px; overflow: hidden; line-height: 19px; white-space: nowrap; }
.desc p { margin-bottom: 18px; }
.desc a { color: #0a66cc; text-decoration: underline; }
.descscroll { width: 20px; flex: none; }
.descscroll button { height: 42px; }
.descscroll .thumb { flex: 241; }
.descscroll .track { flex: 164; }
.descscroll button:last-child { height: 54px; }
.listside { flex: 1; min-width: 0; background: #9ab3d1; padding-top: 19px; display: flex; margin-left: -9px; }
.listframe { flex: 1; min-width: 0; display: grid; grid-template: 1fr 21px / 1fr 20px; padding: 12px 0 1px 9px; background: #fff; border-top-left-radius: 9px; }
.list { overflow: hidden; min-height: 0; }
table { width: 100%; height: 100%; border-collapse: collapse; table-layout: fixed; }
.c1 { width: 437px; }
.c2 { width: 125px; }
.c3 { width: 250px; }
th { height: 23px; padding: 0 7px; font-weight: normal; text-align: left; background: #fcfcfc; border: 1px solid #dedede; line-height: 20px; }
th.mid { text-align: center; }
td { padding: 0 7px; white-space: nowrap; overflow: hidden; line-height: 20px; text-align: center; }
td:first-child { padding: 0 0 0 6px; text-align: left; }
td:last-child { text-align: left; }
td svg { display: inline-block; width: 16px; height: 18px; vertical-align: middle; }
td span { display: inline-block; padding-left: 5px; vertical-align: middle; }
.sorted { position: relative; }
.sorted i { position: absolute; left: 8px; top: 0; border: 5px solid transparent; border-bottom-color: #111; border-top: 0; }
.selected { color: #e9f3ff; background: linear-gradient(#3399ff, #3399ff) 24px 0 no-repeat; }
.listv .thumb { height: 21px; border-width: 1px 0; }
.listv .track { flex: 1; }
.listh .thumb { flex: 830; border-width: 0 1px; }
.listh .track { flex: 167; }

.tabs { height: 23px; flex: none; display: flex; }
.tabs button { position: relative; width: 68px; padding-left: 2px; }
.tabs button + button { width: 81px; padding: 0 8px 0 0; }
.tabs svg { position: absolute; left: 0; top: 0; width: 100%; height: 22px; }
.tabs span { position: relative; }

.status { height: 29px; flex: none; display: flex; align-items: center; padding-left: 2px; background: #fff; border: 1px solid #c0c0c0; border-width: 1px 6px 2px 0; border-right-color: #a7a7a7; }
.status span:first-child { flex: 1; }
.cell { align-self: stretch; border-left: 1px solid #c9c9c9; }
.cell.a { width: 166px; }
.cell.b { width: 108px; }

.taskbar { height: 50px; flex: none; display: flex; background: #65c9ea; border: 1px solid #3d6472; }
.taskbar > button { width: 77px; }
.taskbar .start { width: 63px; }
.taskbar .run { width: 74px; margin-right: 4px; background: #77cfeb; border: 1px solid #3a8aa5; border-width: 0 1px; }
.taskbar .front { background: #a4def1; }
.tray { margin-left: auto; display: flex; align-items: center; gap: 10px; padding-right: 21px; }
.more { margin-right: 6px; }
.clock { margin-left: 13px; text-align: center; line-height: 21px; }
.watermark { position: absolute; right: 61px; bottom: 81px; font-size: 18px; line-height: 25px; color: rgba(140, 140, 140, .6); white-space: nowrap; }
.watermark strong { display: block; font-size: 24px; font-weight: normal; line-height: 32px; }
.grip { position: absolute; right: 1px; bottom: 1px; }
```
